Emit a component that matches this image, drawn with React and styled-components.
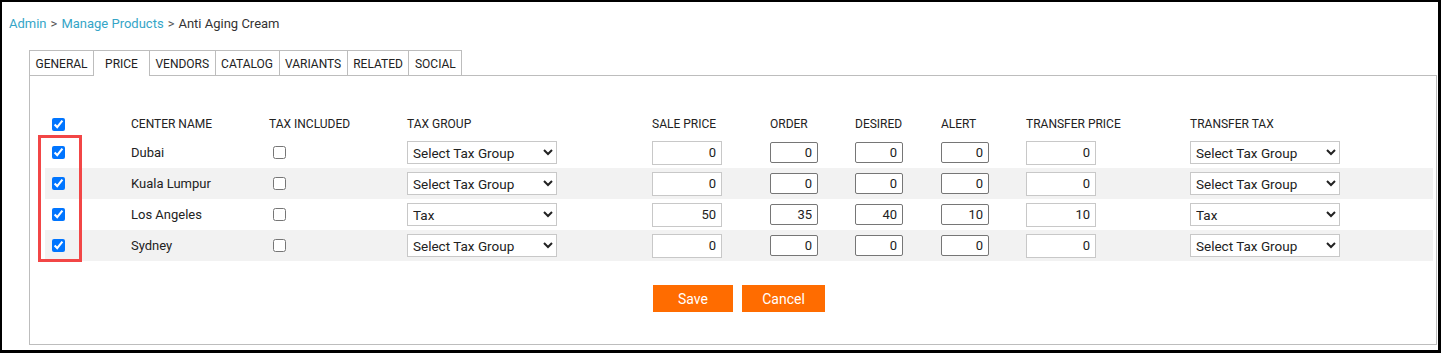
import React from 'react';
import styled, { createGlobalStyle } from 'styled-components';

const GlobalStyle = createGlobalStyle`
  html, body {
    margin: 0;
    padding: 0;
    background: #fff;
  }
  body {
    font-family: Roboto, "Liberation Sans", Arial, sans-serif;
    color: #222;
  }
`;

const Frame = styled.div`
  box-sizing: border-box;
  width: 1441px;
  height: 353px;
  border: 2px solid #000;
  border-right-width: 3px;
  border-bottom-width: 3px;
  padding: 14px 0 0 7px;
  background: #fff;
`;

const Breadcrumb = styled.div`
  font-size: 13px;
  line-height: 16px;
  height: 16px;
  color: #333;
`;

const Crumb = styled.a`
  color: #35a5c7;
  text-decoration: none;
`;

const Sep = styled.span`
  color: #555;
  margin: 0 4px;
`;

const TabBar = styled.div`
  display: flex;
  margin: 18px 0 0 20px;
  height: 25px;
`;

const Tab = styled.div`
  box-sizing: border-box;
  height: ${p => (p.$active ? '26px' : '25px')};
  padding: 1px ${p => (p.$active ? '11px' : '5.5px')} 0;
  border: 1px solid #bdbdbd;
  border-bottom: none;
  margin-right: -1px;
  background: #fff;
  font-size: 12px;
  line-height: 24px;
  color: #222;
  position: relative;
  z-index: ${p => (p.$active ? 2 : 1)};
  cursor: pointer;
`;

const Panel = styled.div`
  box-sizing: border-box;
  width: 1408px;
  height: 270px;
  margin-left: 20px;
  border: 1px solid #bdbdbd;
  padding: 35px 3px 0 15px;
`;

const TableWrap = styled.div`
  position: relative;
  width: 1388px;
`;

const Grid = styled.table`
  width: 1388px;
  table-layout: fixed;
  border-collapse: collapse;
`;

const HeadRow = styled.tr`
  height: 26px;
`;

const Row = styled.tr`
  height: 31px;
  background: ${p => (p.$striped ? '#f2f2f2' : 'transparent')};
`;

const Th = styled.th`
  padding: 0 0 0 ${p => p.$pad || 0}px;
  text-align: left;
  font-weight: normal;
  font-size: 12px;
  color: #222;
  vertical-align: middle;
  white-space: nowrap;
`;

const Td = styled.td`
  padding: 0 0 0 ${p => p.$pad || 0}px;
  font-size: 13px;
  color: #222;
  vertical-align: middle;
  white-space: nowrap;
`;

const Check = styled.input.attrs({ type: 'checkbox' })`
  display: block;
  width: 13px;
  height: 13px;
  margin: 0;
`;

const Select = styled.select`
  display: block;
  box-sizing: border-box;
  width: 150px;
  height: 23px;
  border: 1px solid #c8c8c8;
  border-radius: 0;
  background: #fff;
  padding: 0 1px;
  font-family: Roboto, "Liberation Sans", Arial, sans-serif;
  font-size: 13.5px;
  color: #222;
  outline: none;
`;

const PriceInput = styled.input`
  display: block;
  box-sizing: border-box;
  width: 70px;
  height: 24px;
  border: 1px solid #c8c8c8;
  border-radius: 0;
  padding: 0 5px;
  text-align: right;
  font-family: Roboto, "Liberation Sans", Arial, sans-serif;
  font-size: 13px;
  color: #222;
  outline: none;
`;

const QtyInput = styled.input`
  display: block;
  box-sizing: border-box;
  width: 48px;
  height: 21px;
  border: 1px solid #767676;
  border-radius: 2px;
  padding: 0 5px;
  text-align: right;
  font-family: Roboto, "Liberation Sans", Arial, sans-serif;
  font-size: 13px;
  color: #222;
  outline: none;
`;

const Highlight = styled.div`
  position: absolute;
  left: -7px;
  top: 24px;
  width: 44px;
  height: 127px;
  box-sizing: border-box;
  border: 3px solid #f24646;
  pointer-events: none;
`;

const Actions = styled.div`
  display: flex;
  justify-content: center;
  gap: 9px;
  width: 1388px;
  margin-top: 24px;
`;

const Button = styled.button`
  width: ${p => p.$w}px;
  height: 27px;
  border: none;
  background: #ff6c00;
  color: #fff;
  font-family: Roboto, "Liberation Sans", Arial, sans-serif;
  font-size: 14px;
  cursor: pointer;
`;

const tabs = ['GENERAL', 'PRICE', 'VENDORS', 'CATALOG', 'VARIANTS', 'RELATED', 'SOCIAL'];

const widths = [86, 138, 138, 245, 118, 85, 86, 85, 164, 243];

const centers = [
  { name: 'Dubai', tax: '', sale: 0, order: 0, desired: 0, alert: 0, transfer: 0, ttax: '' },
  { name: 'Kuala Lumpur', tax: '', sale: 0, order: 0, desired: 0, alert: 0, transfer: 0, ttax: '' },
  { name: 'Los Angeles', tax: 'tax', sale: 50, order: 35, desired: 40, alert: 10, transfer: 10, ttax: 'tax' },
  { name: 'Sydney', tax: '', sale: 0, order: 0, desired: 0, alert: 0, transfer: 0, ttax: '' },
];

function TaxSelect({ value }) {
  return (
    <Select defaultValue={value}>
      <option value="">Select Tax Group</option>
      <option value="tax">Tax</option>
    </Select>
  );
}

export default function App() {
  return (
    <>
      <GlobalStyle />
      <Frame>
        <Breadcrumb>
          <Crumb href="#">Admin</Crumb>
          <Sep>&gt;</Sep>
          <Crumb href="#">Manage Products</Crumb>
          <Sep>&gt;</Sep>
          Anti Aging Cream
        </Breadcrumb>

        <TabBar>
          {tabs.map(t => (
            <Tab key={t} $active={t === 'PRICE'}>{t}</Tab>
          ))}
        </TabBar>

        <Panel>
          <TableWrap>
            <Grid>
              <colgroup>
                {widths.map((w, i) => <col key={i} style={{ width: w }} />)}
              </colgroup>
              <thead>
                <HeadRow>
                  <Th $pad={7}><Check defaultChecked /></Th>
                  <Th>CENTER NAME</Th>
                  <Th>TAX INCLUDED</Th>
                  <Th>TAX GROUP</Th>
                  <Th>SALE PRICE</Th>
                  <Th>ORDER</Th>
                  <Th>DESIRED</Th>
                  <Th>ALERT</Th>
                  <Th>TRANSFER PRICE</Th>
                  <Th>TRANSFER TAX</Th>
                </HeadRow>
              </thead>
              <tbody>
                {centers.map((c, i) => (
                  <Row key={c.name} $striped={i % 2 === 1}>
                    <Td $pad={7}><Check defaultChecked /></Td>
                    <Td>{c.name}</Td>
                    <Td $pad={4}><Check /></Td>
                    <Td><TaxSelect value={c.tax} /></Td>
                    <Td><PriceInput defaultValue={c.sale} /></Td>
                    <Td><QtyInput defaultValue={c.order} /></Td>
                    <Td><QtyInput defaultValue={c.desired} /></Td>
                    <Td><QtyInput defaultValue={c.alert} /></Td>
                    <Td><PriceInput defaultValue={c.transfer} /></Td>
                    <Td><TaxSelect value={c.ttax} /></Td>
                  </Row>
                ))}
              </tbody>
            </Grid>
            <Highlight />
          </TableWrap>

          <Actions>
            <Button $w={80}>Save</Button>
            <Button $w={83}>Cancel</Button>
          </Actions>
        </Panel>
      </Frame>
    </>
  );
}
